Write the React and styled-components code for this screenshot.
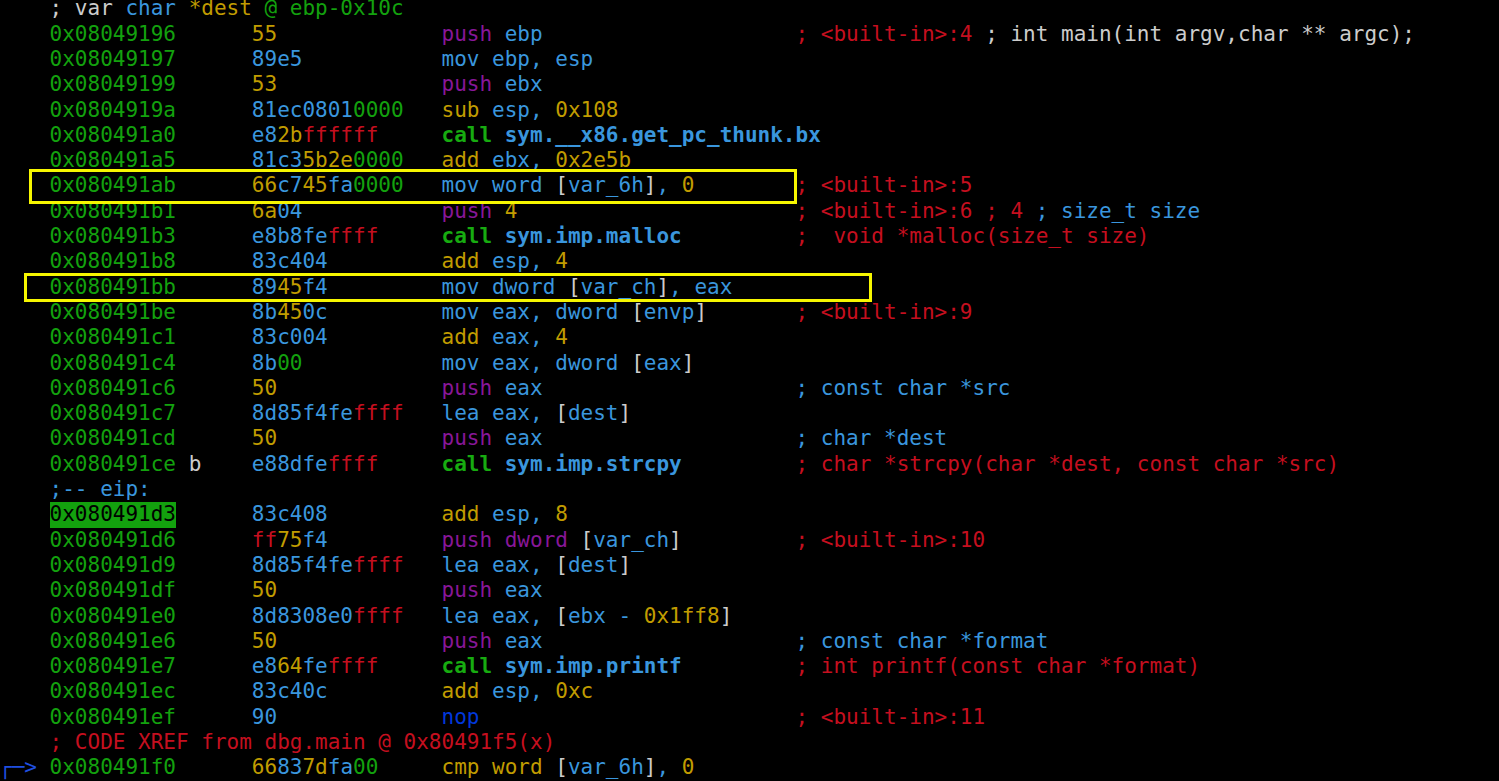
import React from 'react'
import styled, { createGlobalStyle } from 'styled-components'

const palette = {
  g: '#13a10e',
  G: '#17ab10',
  c: '#3a96dd',
  y: '#c19c00',
  p: '#881798',
  r: '#c50f1f',
  w: '#cccccc',
  b: '#0037da',
  a: '#1f4fe0',
}

// radare2 style byte colouring: 00 green, ff red, printable yellow, rest cyan
const byteColor = (h) => {
  const v = parseInt(h, 16)
  if (v === 0) return 'g'
  if (v === 0xff) return 'r'
  if (v >= 0x20 && v < 0x7f) return 'y'
  return 'c'
}

const byteTokens = (hex) => {
  const out = []
  for (let i = 0; i < hex.length; i += 2) {
    const h = hex.slice(i, i + 2)
    const col = byteColor(h)
    const last = out[out.length - 1]
    if (last && last[1] === col) last[0] += h
    else out.push([h, col])
  }
  return out
}

const call = (target) => [['call', 'G', true], [' '], [target, 'c', true]]
const pushReg = (reg) => [['push', 'p'], [' ' + reg, 'c']]
const addImm = (reg, n) => [['add', 'y'], [' ' + reg + ', ', 'c'], [n, 'y']]
const mem = (pre, inner, post = []) => [[pre, 'c'], ['[', 'w'], ...inner, [']', 'w'], ...post]

const lines = [
  { label: [['; var ', 'w'], ['char', 'c'], [' *dest ', 'y'], ['@ ebp-0x10c', 'g']] },
  { addr: '0x08049196', bytes: '55', op: pushReg('ebp'), cmt: [['; <built-in>:4', 'r'], [' ; int main(int argv,char ** argc);', 'w']] },
  { addr: '0x08049197', bytes: '89e5', op: [['mov ebp, esp', 'c']] },
  { addr: '0x08049199', bytes: '53', op: pushReg('ebx') },
  { addr: '0x0804919a', bytes: '81ec08010000', op: [['sub', 'y'], [' esp, ', 'c'], ['0x108', 'y']] },
  { addr: '0x080491a0', bytes: 'e82bffffff', op: call('sym.__x86.get_pc_thunk.bx') },
  { addr: '0x080491a5', bytes: '81c35b2e0000', op: addImm('ebx', '0x2e5b') },
  { addr: '0x080491ab', bytes: '66c745fa0000', op: mem('mov word ', [['var_6h', 'c']], [[', ', 'c'], ['0', 'y']]), cmt: [['; <built-in>:5', 'r']] },
  { addr: '0x080491b1', bytes: '6a04', op: [['push', 'p'], [' '], ['4', 'y']], cmt: [['; <built-in>:6 ; 4', 'r'], [' ; size_t size', 'c']] },
  { addr: '0x080491b3', bytes: 'e8b8feffff', op: call('sym.imp.malloc'), cmt: [[';  void *malloc(size_t size)', 'r']] },
  { addr: '0x080491b8', bytes: '83c404', op: addImm('esp', '4') },
  { addr: '0x080491bb', bytes: '8945f4', op: mem('mov dword ', [['var_ch', 'c']], [[', eax', 'c']]) },
  { addr: '0x080491be', bytes: '8b450c', op: mem('mov eax, dword ', [['envp', 'c']]), cmt: [['; <built-in>:9', 'r']] },
  { addr: '0x080491c1', bytes: '83c004', op: addImm('eax', '4') },
  { addr: '0x080491c4', bytes: '8b00', op: mem('mov eax, dword ', [['eax', 'c']]) },
  { addr: '0x080491c6', bytes: '50', op: pushReg('eax'), cmt: [['; const char *src', 'c']] },
  { addr: '0x080491c7', bytes: '8d85f4feffff', op: mem('lea eax, ', [['dest', 'c']]) },
  { addr: '0x080491cd', bytes: '50', op: pushReg('eax'), cmt: [['; char *dest', 'c']] },
  { addr: '0x080491ce', flag: ' b', bytes: 'e88dfeffff', op: call('sym.imp.strcpy'), cmt: [['; char *strcpy(char *dest, const char *src)', 'r']] },
  { label: [[';-- eip:', 'c']] },
  { addr: '0x080491d3', current: true, bytes: '83c408', op: addImm('esp', '8') },
  { addr: '0x080491d6', bytes: 'ff75f4', op: [['push dword ', 'p'], ['[', 'w'], ['var_ch', 'c'], [']', 'w']], cmt: [['; <built-in>:10', 'r']] },
  { addr: '0x080491d9', bytes: '8d85f4feffff', op: mem('lea eax, ', [['dest', 'c']]) },
  { addr: '0x080491df', bytes: '50', op: pushReg('eax') },
  { addr: '0x080491e0', bytes: '8d8308e0ffff', op: mem('lea eax, ', [['ebx - ', 'c'], ['0x1ff8', 'y']]) },
  { addr: '0x080491e6', bytes: '50', op: pushReg('eax'), cmt: [['; const char *format', 'c']] },
  { addr: '0x080491e7', bytes: 'e864feffff', op: call('sym.imp.printf'), cmt: [['; int printf(const char *format)', 'r']] },
  { addr: '0x080491ec', bytes: '83c40c', op: addImm('esp', '0xc') },
  { addr: '0x080491ef', bytes: '90', op: [['nop', 'b']], cmt: [['; <built-in>:11', 'r']] },
  { label: [['; CODE XREF from dbg.main @ 0x80491f5(x)', 'r']] },
  { addr: '0x080491f0', arrow: '┌─>', bytes: '66837dfa00', op: [['cmp word ', 'y'], ['[', 'w'], ['var_6h', 'c'], [']', 'w'], [', ', 'c'], ['0', 'y']] },
]

const Global = createGlobalStyle`
  html, body {
    margin: 0;
    padding: 0;
    background: #000;
  }
`

const Screen = styled.div`
  position: relative;
  width: 100vw;
  height: 100vh;
  overflow: hidden;
  background: #000;
  font-family: "DejaVu Sans Mono", "Liberation Mono", monospace;
  font-size: 21px;
  color: ${palette.w};
`

const Listing = styled.div`
  margin: -3.6px 0 0 -1px;
`

const Row = styled.div`
  display: grid;
  grid-template-columns: 4ch 16ch 15ch 28ch max-content;
  height: 25.3px;
  line-height: 25.3px;
  white-space: pre;
`

const Cell = styled.span`
  overflow: visible;
`

const Wide = styled.span`
  grid-column: 2 / -1;
`

const Arrow = styled.span`
  color: ${palette.a};
`

const Addr = styled.span`
  color: ${(p) => (p.$current ? '#000' : palette.g)};
  background: ${(p) => (p.$current ? palette.g : 'transparent')};
  display: inline-block;
  height: 25.3px;
`

const Tok = styled.span`
  color: ${(p) => palette[p.$c] || palette.w};
  font-weight: ${(p) => (p.$bold ? 700 : 400)};
`

const Marker = styled.div`
  position: absolute;
  top: ${(p) => p.$top}px;
  left: ${(p) => p.$left}px;
  width: ${(p) => p.$width}px;
  height: ${(p) => p.$height}px;
  border: 3px solid #f6f600;
  box-sizing: border-box;
  pointer-events: none;
`

const Toks = ({ items }) =>
  items.map(([text, c, bold], i) => (
    <Tok key={i} $c={c} $bold={bold}>
      {text}
    </Tok>
  ))

const Line = ({ line }) => {
  if (line.label) {
    return (
      <Row>
        <Cell />
        <Wide>
          <Toks items={line.label} />
        </Wide>
      </Row>
    )
  }
  return (
    <Row>
      <Cell>{line.arrow && <Arrow>{line.arrow}</Arrow>}</Cell>
      <Cell>
        <Addr $current={line.current}>{line.addr}</Addr>
        {line.flag && <Tok $c="w">{line.flag}</Tok>}
      </Cell>
      <Cell>
        <Toks items={byteTokens(line.bytes)} />
      </Cell>
      <Cell>
        <Toks items={line.op} />
      </Cell>
      <Cell>{line.cmt && <Toks items={line.cmt} />}</Cell>
    </Row>
  )
}

export default function App() {
  return (
    <Screen>
      <Global />
      <Listing>
        {lines.map((line, i) => (
          <Line key={i} line={line} />
        ))}
      </Listing>
      <Marker $top={169} $left={29} $width={768} $height={35} />
      <Marker $top={273} $left={24} $width={848} $height={29} />
    </Screen>
  )
}
